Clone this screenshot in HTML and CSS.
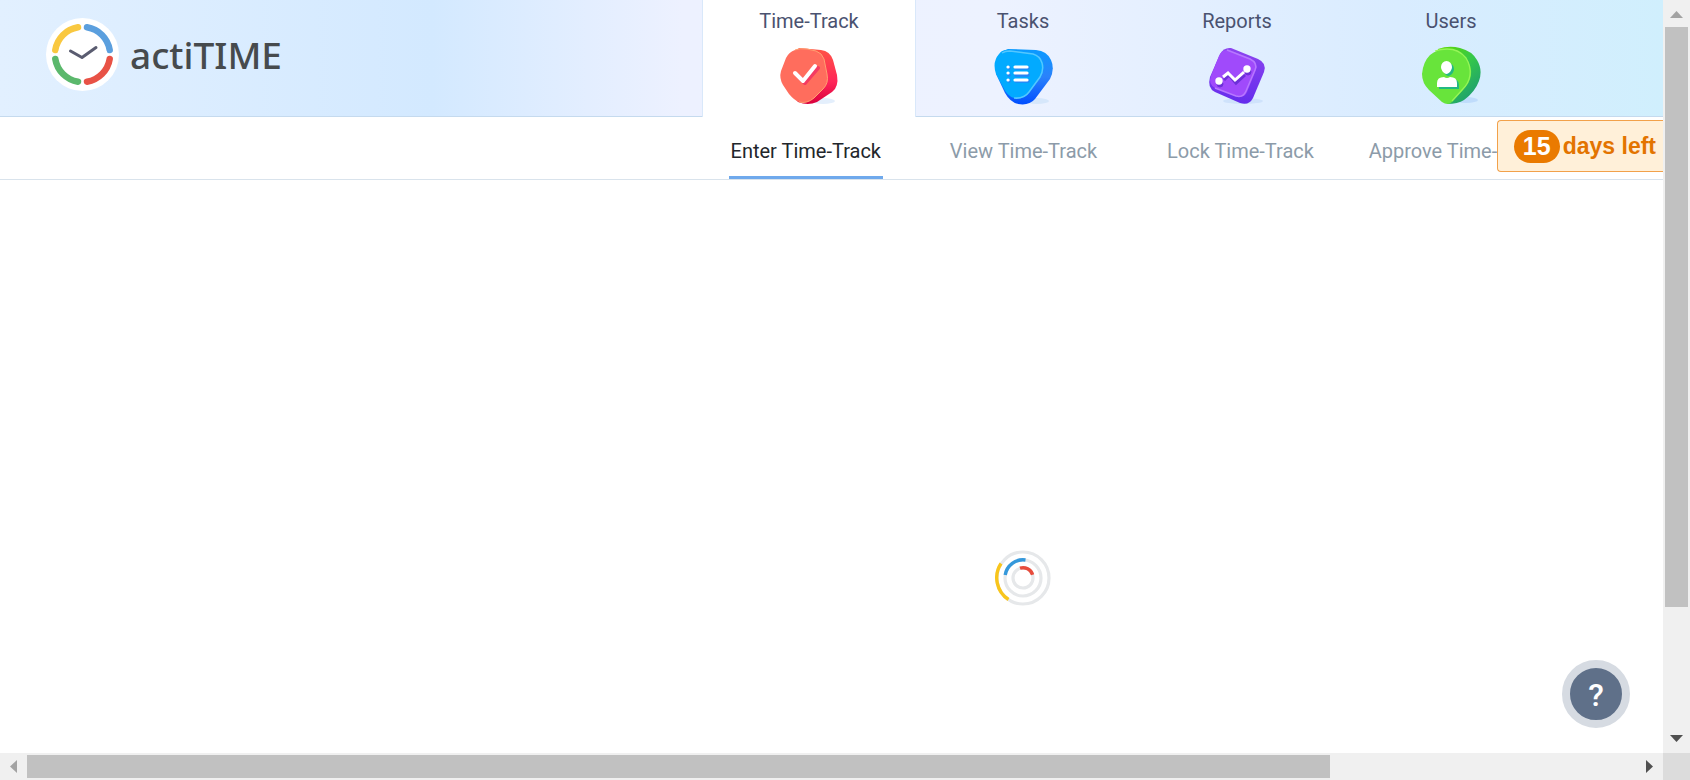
FILE: index.html
```html
<!DOCTYPE html>
<html lang="en">
<head>
<meta charset="utf-8">
<title>actiTIME - Enter Time-Track</title>
<link rel="stylesheet" href="styles.css">
</head>
<body>
<div class="window">
  <div class="view">
    <header class="header">
      <a class="brand" href="#">
        <svg class="brand-mark" viewBox="0 0 73 73" aria-hidden="true">
          <circle cx="36.500" cy="36.500" r="36.500" fill="#fff"/>
          <g fill="none" stroke-width="6.500" stroke-linecap="round">
            <path d="M9.300 32A27.500 27.500 0 0 1 32 9.300" stroke="#f9c840"/>
            <path d="M41 9.300A27.500 27.500 0 0 1 63.700 32" stroke="#5b9fde"/>
            <path d="M63.700 41A27.500 27.500 0 0 1 41 63.700" stroke="#e85246"/>
            <path d="M32 63.700A27.500 27.500 0 0 1 9.300 41" stroke="#5bb86c"/>
          </g>
          <path d="M24.500 33L36 39.500L50 29.500" fill="none" stroke="#5a5c70" stroke-width="3" stroke-linecap="round" stroke-linejoin="round"/>
        </svg>
        <span class="brand-name">actiTIME</span>
      </a>
      <nav class="tabs" aria-label="Main">
        <a class="tab tab-active" href="#">
          <span>Time-Track</span>
          <svg class="tab-icon" viewBox="0 0 60 60" aria-hidden="true">
            <defs><linearGradient id="red" x1="0" y1="0" x2="0" y2="1"><stop offset="0" stop-color="#ff5545"/><stop offset=".6" stop-color="#ff2659"/><stop offset="1" stop-color="#d9003c"/></linearGradient></defs>
            <ellipse cx="44" cy="55" rx="12" ry="3" fill="#e4effc"/>
            <path d="M20 2L42 4Q51 5 54 14L58 29Q60 41 53 46L38 56Q29 60 19 56L14 50V8Z" fill="url(#red)"/>
            <path d="M16 4Q20 2 28 3L37 5Q43 7 45 13L48 28Q50 37 44 43L35 52Q28 58 20 56Q15 54 10 48L4 39Q0 32 2 25L7 12Q10 6 16 4Z" fill="#ff6d5d"/>
            <path d="M16 4Q20 2 28 3L37 5Q43 7 45 13L48 28Q50 37 44 43L35 52Q28 58 20 56" fill="none" stroke="#ffa071"/>
            <path d="M18 29L26 37L39 22" fill="none" stroke="#f43b62" stroke-width="4" stroke-linecap="round" stroke-linejoin="round"/>
            <path d="M16 27L24 35L36 20" fill="none" stroke="#fff" stroke-width="4" stroke-linecap="round" stroke-linejoin="round"/>
          </svg>
        </a>
        <a class="tab" href="#">
          <span>Tasks</span>
          <svg class="tab-icon" viewBox="0 0 60 60" aria-hidden="true">
            <defs><linearGradient id="blue" x1="0" y1="0" x2="0" y2="1"><stop offset="0" stop-color="#0a9aff"/><stop offset=".5" stop-color="#2b82fb"/><stop offset="1" stop-color="#004eff"/></linearGradient></defs>
            <ellipse cx="44" cy="55" rx="12" ry="3" fill="#d6e7fb"/>
            <path d="M15 3L43 4Q54 5 58 14Q62 23 57 33L42 53Q36 60 25 58Q17 56 12 47L3 28L8 6Z" fill="url(#blue)"/>
            <path d="M17 4L40 7Q47 9 50 16Q52 24 48 31L36 47Q31 54 21 52Q14 50 10 41L3 28Q-1 16 6 8Q10 3 17 4Z" fill="#02aaff"/>
            <path d="M9 7Q12 5 17 5L40 8Q47 10 49 17Q51 24 47 31L36 46Q31 53 21 52" fill="none" stroke="#54c6ff" stroke-width="1.500"/>
            <path d="M23 22H35M23 29H35M23 35H35M16 22H16.100M16 29H16.100M16 35H16.100" stroke="#2784f5" stroke-width="3.500" stroke-linecap="round"/>
            <path d="M22 21H34M22 27H34M22 34H34M15 21H15.100M15 27H15.100M15 34H15.100" stroke="#fff" stroke-width="3.200" stroke-linecap="round"/>
          </svg>
        </a>
        <a class="tab" href="#">
          <span>Reports</span>
          <svg class="tab-icon" viewBox="0 0 60 60" aria-hidden="true">
            <defs><linearGradient id="purple" x1="0" y1="0" x2="0" y2="1"><stop offset="0" stop-color="#8d45ef"/><stop offset="1" stop-color="#652cec"/></linearGradient></defs>
            <ellipse cx="36" cy="55" rx="20" ry="3" fill="#cfe2fb"/>
            <path d="M24 2L51 13Q60 17 57 26L46 52Q42 60 33 57L8 46Q0 42 3 31L13 8Q17 1 24 2Z" fill="url(#purple)"/>
            <path d="M22 4L43 12Q52 17 49 24L40 46Q37 53 29 50L8 42Q1 38 4 30L12 10Q15 3 22 4Z" fill="#a04afb"/>
            <path d="M20 4L43 13Q51 17 48 24L39 45Q36 52 29 50L8 42" fill="none" stroke="#b778ff" stroke-width="1.400"/>
            <g transform="translate(1 2)" fill="#6d30d8" stroke="#6d30d8"><path d="M16 32L21 27L28 35L37 27" fill="none" stroke-width="3"/><circle cx="12" cy="36" r="3"/><circle cx="40" cy="24" r="3"/></g>
            <path d="M16 31L21 27L28 34L37 26" fill="none" stroke="#fff" stroke-width="3"/>
            <circle cx="12" cy="35" r="3.700" fill="#fff"/><circle cx="40" cy="23" r="3.700" fill="#fff"/>
          </svg>
        </a>
        <a class="tab" href="#">
          <span>Users</span>
          <svg class="tab-icon" viewBox="0 0 60 60" aria-hidden="true">
            <defs>
              <linearGradient id="green" x1="0" y1="0" x2=".7" y2="1"><stop offset="0" stop-color="#62d900"/><stop offset=".5" stop-color="#35c84a"/><stop offset="1" stop-color="#1d9d70"/></linearGradient>
              <path id="person" d="M20 21a5.500 6 0 0 1 11 0c0 3-3 7-5.500 7s-5.500-4-5.500-7M16 41v-4q0-6 7-6q3 2 6 0q7 0 7 6v4z"/>
            </defs>
            <ellipse cx="45" cy="54" rx="12" ry="3" fill="#bfdcfb"/>
            <path d="M17 3Q28 -1 39 2Q51 5 56 14Q62 24 58 35Q54 46 43 54Q37 58 26 58Z" fill="url(#green)"/>
            <path d="M26 3Q38 3 45 12Q51 20 50 29Q49 37 42 44L31 56Q27 60 21 56L8 44Q1 37 1 28Q2 16 9 9Q16 3 26 3Z" fill="#68e43b"/>
            <path d="M14 5Q20 3 26 3Q38 3 45 12Q50 20 49 29Q48 37 41 44L31 55" fill="none" stroke="#95f557" stroke-width="1.300"/>
            <use href="#person" x="2" y="2" fill="#22b982"/>
            <use href="#person" fill="#fff"/>
          </svg>
        </a>
      </nav>
    </header>
    <nav class="subnav" aria-label="Time-Track">
      <a class="sub sub-active" href="#">Enter Time-Track</a>
      <a class="sub" href="#">View Time-Track</a>
      <a class="sub" href="#">Lock Time-Track</a>
      <a class="sub" href="#">Approve Time-Track</a>
      <a class="trial" href="#"><span class="trial-count">15</span>days left</a>
    </nav>
    <main class="content">
      <svg class="loader" viewBox="0 0 56 56" role="img" aria-label="Loading">
        <g fill="none" stroke="#e6e8ea" stroke-width="3.200"><circle cx="28" cy="28" r="26"/><circle cx="28" cy="28" r="18"/><circle cx="28" cy="28" r="10"/></g>
        <g fill="none" stroke-width="3.400">
          <path d="M6 13.500A26 26 0 0 0 13.500 49.500" stroke="#f8c51c"/>
          <path d="M10.200 25A18 18 0 0 1 30.500 10" stroke="#3498db"/>
          <path d="M25 18.200A10 10 0 0 1 37.600 24.800" stroke="#e74c3c"/>
        </g>
      </svg>
    </main>
    <button class="help" type="button" aria-label="Help">?</button>
  </div>
  <div class="bar bar-v">
    <button class="arrow" type="button" aria-label="Scroll up"><svg viewBox="0 0 27 27"><path d="M7 18L13.500 11L20 18Z" fill="#a3a3a3"/></svg></button>
    <div class="track"><div class="thumb"></div></div>
    <button class="arrow" type="button" aria-label="Scroll down"><svg viewBox="0 0 27 27"><path d="M7 9L13.500 16L20 9Z" fill="#505050"/></svg></button>
  </div>
  <div class="bar bar-h">
    <button class="arrow" type="button" aria-label="Scroll left"><svg viewBox="0 0 27 27"><path d="M17 7L10 13.500L17 20Z" fill="#a3a3a3"/></svg></button>
    <div class="track"><div class="thumb"></div></div>
    <button class="arrow" type="button" aria-label="Scroll right"><svg viewBox="0 0 27 27"><path d="M10 7L17 13.500L10 20Z" fill="#505050"/></svg></button>
  </div>
  <div class="corner"></div>
</div>
</body>
</html>
```
FILE: styles.css
```css
* { box-sizing: border-box; }
body { margin: 0; font-family: Roboto, "Liberation Sans", sans-serif; background: #fff; }
a { color: inherit; text-decoration: none; }

.window {
  display: grid;
  grid-template: minmax(0, 1fr) 27px / minmax(0, 1fr) 27px;
  height: 100vh;
}
.view {
  position: relative;
  display: flex;
  flex-direction: column;
  overflow: hidden;
}

.header {
  display: flex;
  min-height: 117px;
  padding-right: 105px;
  background: linear-gradient(90deg, #e2f0ff 0%, #d3e9ff 26%, #edf1ff 41%, #edf2ff 60%, #d9ecff 84%, #d0effd 100%);
  box-shadow: inset 0 -1px #c5daee;
}
.brand { display: flex; align-items: center; gap: 11px; padding: 0 0 8px 46px; }
.brand-mark { width: 73px; height: 73px; }
.brand-name { font: 500 37px/48px "Noto Sans", sans-serif; color: #464a4d; }
.tabs { display: flex; margin-left: auto; }
.tab {
  display: flex;
  flex-direction: column;
  align-items: center;
  gap: 13px;
  width: 214px;
  padding-top: 9px;
  font-size: 20px;
  line-height: 24px;
  color: #4a5270;
}
.tab-active { background: #fff; border: solid #d9e8fa; border-width: 0 1px; }
.tab-icon { width: 60px; height: 60px; }

.subnav {
  position: relative;
  display: flex;
  justify-content: flex-end;
  min-height: 63px;
  padding-right: 97px;
  border-bottom: 1px solid #d9e3ec;
}
.sub {
  display: flex;
  justify-content: center;
  width: 217px;
  padding-top: 22px;
  font-size: 20px;
  line-height: 24px;
  white-space: nowrap;
  color: #8c9ba9;
}
.sub-active {
  width: auto;
  margin: 0 32px;
  padding: 22px 2px 0;
  border-bottom: 3px solid #6fa9ec;
  color: #22262b;
}
.trial {
  position: absolute;
  top: 3px;
  right: 0;
  display: flex;
  align-items: center;
  gap: 3px;
  height: 52px;
  padding: 0 7px 0 16px;
  border: 1px solid #f2a14a;
  border-right: 0;
  border-radius: 4px 0 0 4px;
  background: #fff0d9;
  font: 700 23px/28px "Liberation Sans", Arial, sans-serif;
  color: #e37400;
}
.trial-count {
  padding: 2px 9px 3px;
  border-radius: 17px;
  background: #ea7a00;
  font-size: 25px;
  color: #fff;
}

.content {
  flex: 1;
  display: grid;
  grid-template-rows: 370fr auto 147fr;
  justify-content: center;
  width: 123%;
}
.loader { grid-row: 2; width: 56px; height: 56px; }
.help {
  position: absolute;
  right: 33px;
  bottom: 25px;
  width: 68px;
  height: 68px;
  padding: 2px 0 0;
  border: 8px solid #d6dbe2;
  border-radius: 50%;
  background: #5f7089;
  font: 500 32px/48px Roboto, sans-serif;
  color: #fff;
}

.bar { display: flex; background: #f0f0f0; }
.bar-v { flex-direction: column; }
.arrow { flex: none; width: 27px; height: 27px; padding: 0; border: 0; background: none; }
.arrow svg { display: block; }
.track { flex: 1; padding: 0 2px; }
.bar-h .track { padding: 2px 0; }
.thumb { background: #c1c1c1; }
.bar-v .thumb { height: 83%; }
.bar-h .thumb { width: 81%; height: 100%; }
.corner { background: #dcdcdc; }
```
